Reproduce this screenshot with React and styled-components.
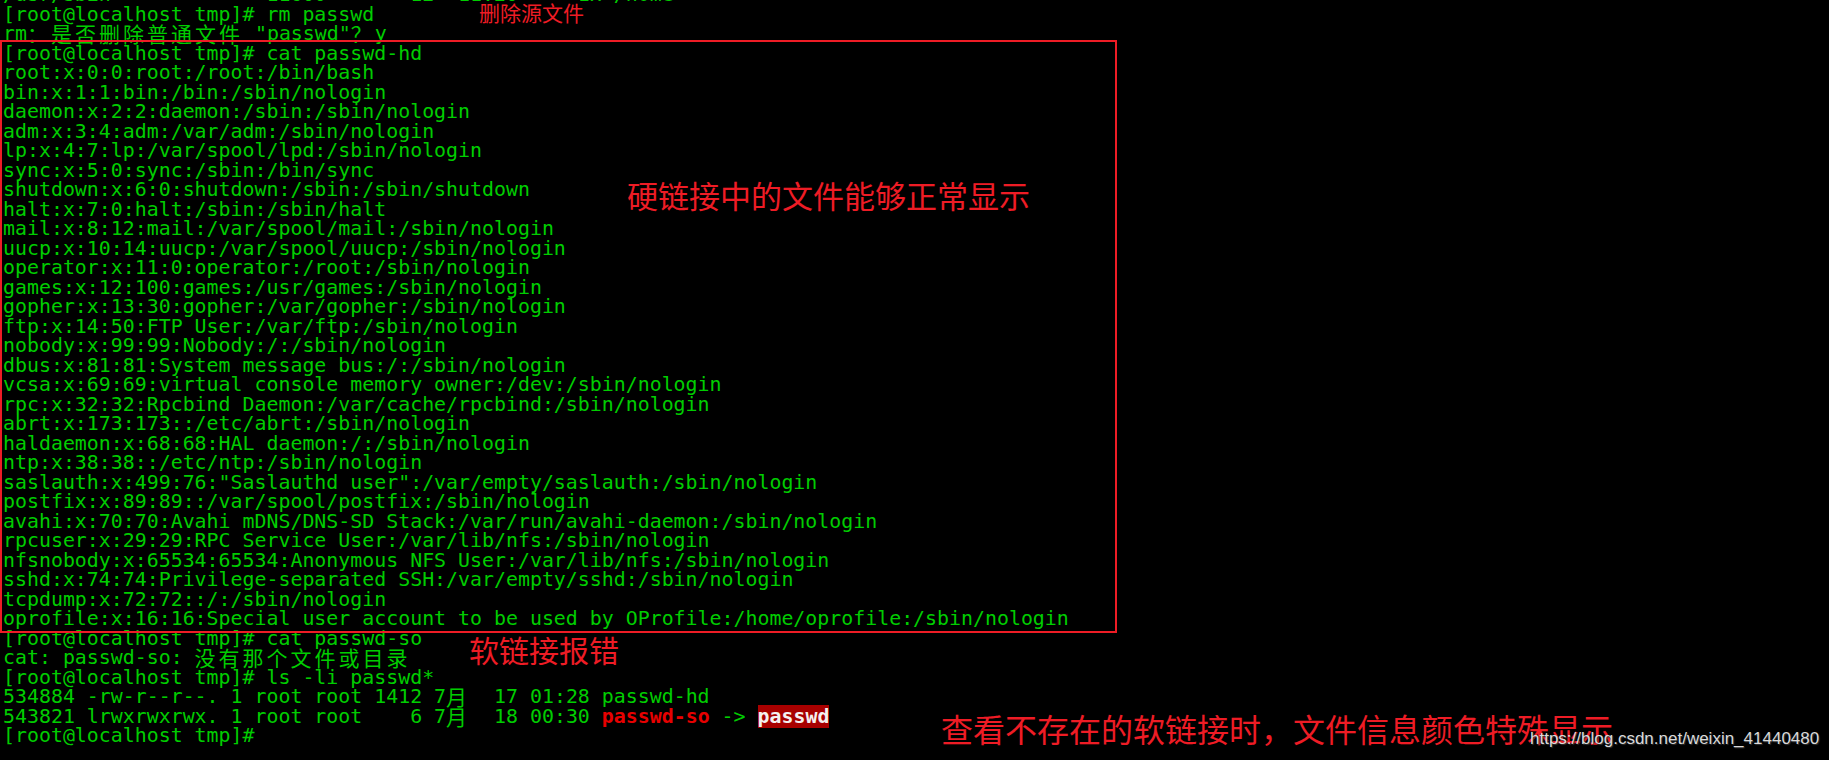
import React from "react";
import styled, { createGlobalStyle } from "styled-components";

const Global = createGlobalStyle`
  html, body { margin: 0; padding: 0; background: #000; }
  #root { width: 1829px; height: 760px; }
`;

const Screen = styled.div`
  position: relative;
  width: 1829px;
  height: 760px;
  overflow: hidden;
  background: #000;
`;

const Terminal = styled.div`
  display: flex;
  flex-direction: column;
  margin-top: -15px;
  padding-left: 3px;
  font-family: "DejaVu Sans Mono", "Noto Sans CJK SC", monospace;
  font-size: 19.9px;
  color: #00cd00;
`;

const Line = styled.div`
  height: 19.5px;
  line-height: 19.5px;
  white-space: pre;
`;

const Wide = styled.span`
  display: inline-block;
  width: 24px;
  font-family: "Noto Sans CJK SC", sans-serif;
  font-size: 21px;
  line-height: 19.5px;
  vertical-align: top;
  overflow: visible;
`;

const BrokenLink = styled.span`
  color: #e80000;
  font-weight: bold;
`;

const MissingTarget = styled.span`
  color: #f4f0f0;
  font-weight: bold;
  background: #a80000;
`;

const Frame = styled.div`
  position: absolute;
  left: 0;
  top: 40px;
  width: 1117px;
  height: 593px;
  box-sizing: border-box;
  border: 2.5px solid #ee1c25;
  pointer-events: none;
`;

const Note = styled.div`
  position: absolute;
  left: ${(p) => p.$x}px;
  top: ${(p) => p.$y}px;
  font-family: "Noto Sans CJK SC", sans-serif;
  font-size: ${(p) => p.$size}px;
  line-height: 1;
  color: #ee1c25;
  white-space: nowrap;
`;

const Watermark = styled.div`
  position: absolute;
  left: 1530px;
  top: 729px;
  font-family: "Liberation Sans", Arial, sans-serif;
  font-size: 17px;
  line-height: 20px;
  color: #d9d9d9;
  text-shadow: 1px 1px 1px #333;
  white-space: nowrap;
`;

const wideRe = /[\u3000-\u303f\u4e00-\u9fff\uff00-\uffef]/;

function Mono({ text }) {
  const parts = [];
  let buf = "";
  Array.from(text).forEach((ch, i) => {
    if (wideRe.test(ch)) {
      if (buf) parts.push(buf);
      buf = "";
      parts.push(<Wide key={i}>{ch}</Wide>);
    } else {
      buf += ch;
    }
  });
  if (buf) parts.push(buf);
  return <>{parts}</>;
}

const lines = [
  "/usr/sbin             11600       12  11:20     1x /home",
  "[root@localhost tmp]# rm passwd",
  "rm：是否删除普通文件 \"passwd\"？y",
  "[root@localhost tmp]# cat passwd-hd",
  "root:x:0:0:root:/root:/bin/bash",
  "bin:x:1:1:bin:/bin:/sbin/nologin",
  "daemon:x:2:2:daemon:/sbin:/sbin/nologin",
  "adm:x:3:4:adm:/var/adm:/sbin/nologin",
  "lp:x:4:7:lp:/var/spool/lpd:/sbin/nologin",
  "sync:x:5:0:sync:/sbin:/bin/sync",
  "shutdown:x:6:0:shutdown:/sbin:/sbin/shutdown",
  "halt:x:7:0:halt:/sbin:/sbin/halt",
  "mail:x:8:12:mail:/var/spool/mail:/sbin/nologin",
  "uucp:x:10:14:uucp:/var/spool/uucp:/sbin/nologin",
  "operator:x:11:0:operator:/root:/sbin/nologin",
  "games:x:12:100:games:/usr/games:/sbin/nologin",
  "gopher:x:13:30:gopher:/var/gopher:/sbin/nologin",
  "ftp:x:14:50:FTP User:/var/ftp:/sbin/nologin",
  "nobody:x:99:99:Nobody:/:/sbin/nologin",
  "dbus:x:81:81:System message bus:/:/sbin/nologin",
  "vcsa:x:69:69:virtual console memory owner:/dev:/sbin/nologin",
  "rpc:x:32:32:Rpcbind Daemon:/var/cache/rpcbind:/sbin/nologin",
  "abrt:x:173:173::/etc/abrt:/sbin/nologin",
  "haldaemon:x:68:68:HAL daemon:/:/sbin/nologin",
  "ntp:x:38:38::/etc/ntp:/sbin/nologin",
  "saslauth:x:499:76:\"Saslauthd user\":/var/empty/saslauth:/sbin/nologin",
  "postfix:x:89:89::/var/spool/postfix:/sbin/nologin",
  "avahi:x:70:70:Avahi mDNS/DNS-SD Stack:/var/run/avahi-daemon:/sbin/nologin",
  "rpcuser:x:29:29:RPC Service User:/var/lib/nfs:/sbin/nologin",
  "nfsnobody:x:65534:65534:Anonymous NFS User:/var/lib/nfs:/sbin/nologin",
  "sshd:x:74:74:Privilege-separated SSH:/var/empty/sshd:/sbin/nologin",
  "tcpdump:x:72:72::/:/sbin/nologin",
  "oprofile:x:16:16:Special user account to be used by OProfile:/home/oprofile:/sbin/nologin",
  "[root@localhost tmp]# cat passwd-so",
  "cat: passwd-so: 没有那个文件或目录",
  "[root@localhost tmp]# ls -li passwd*",
  "534884 -rw-r--r--. 1 root root 1412 7月  17 01:28 passwd-hd",
];

export default function App() {
  return (
    <Screen>
      <Global />
      <Terminal>
        {lines.map((l, i) => (
          <Line key={i}>
            <Mono text={l} />
          </Line>
        ))}
        <Line>
          <Mono text="543821 lrwxrwxrwx. 1 root root    6 7月  18 00:30 " />
          <BrokenLink>passwd-so</BrokenLink>
          {" -> "}
          <MissingTarget>passwd</MissingTarget>
        </Line>
        <Line>[root@localhost tmp]# </Line>
      </Terminal>
      <Frame />
      <Note $x={479} $y={2} $size={21}>删除源文件</Note>
      <Note $x={627} $y={179} $size={31}>硬链接中的文件能够正常显示</Note>
      <Note $x={469} $y={634} $size={30}>软链接报错</Note>
      <Note $x={941} $y={712} $size={32}>查看不存在的软链接时，文件信息颜色特殊显示</Note>
      <Watermark>https://blog.csdn.net/weixin_41440480</Watermark>
    </Screen>
  );
}
